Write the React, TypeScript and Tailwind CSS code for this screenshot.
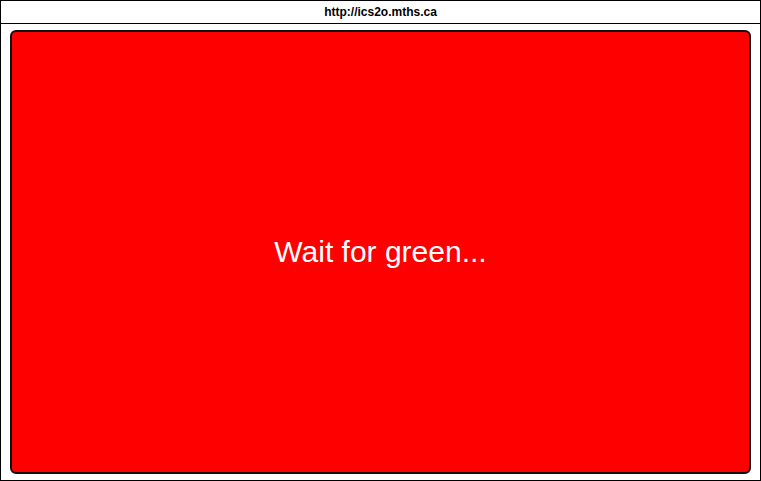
export default function App() {
  return (
    <div className="w-[761px] h-[481px] border border-black bg-white flex flex-col" style={{ fontFamily: '"Liberation Sans", Arial, sans-serif' }}>
      <div className="h-[23px] border-b border-black flex items-center justify-center text-[12px] font-bold text-black shrink-0">
        http://ics2o.mths.ca
      </div>
      <div className="flex-1 pt-[6px] px-[9px] pb-[6px] flex">
        <div className="flex-1 bg-[#ff0000] border-2 border-[#111] rounded-[6px] flex items-center justify-center">
          <span className="text-white text-[30px] leading-none">Wait for green...</span>
        </div>
      </div>
    </div>
  );
}
